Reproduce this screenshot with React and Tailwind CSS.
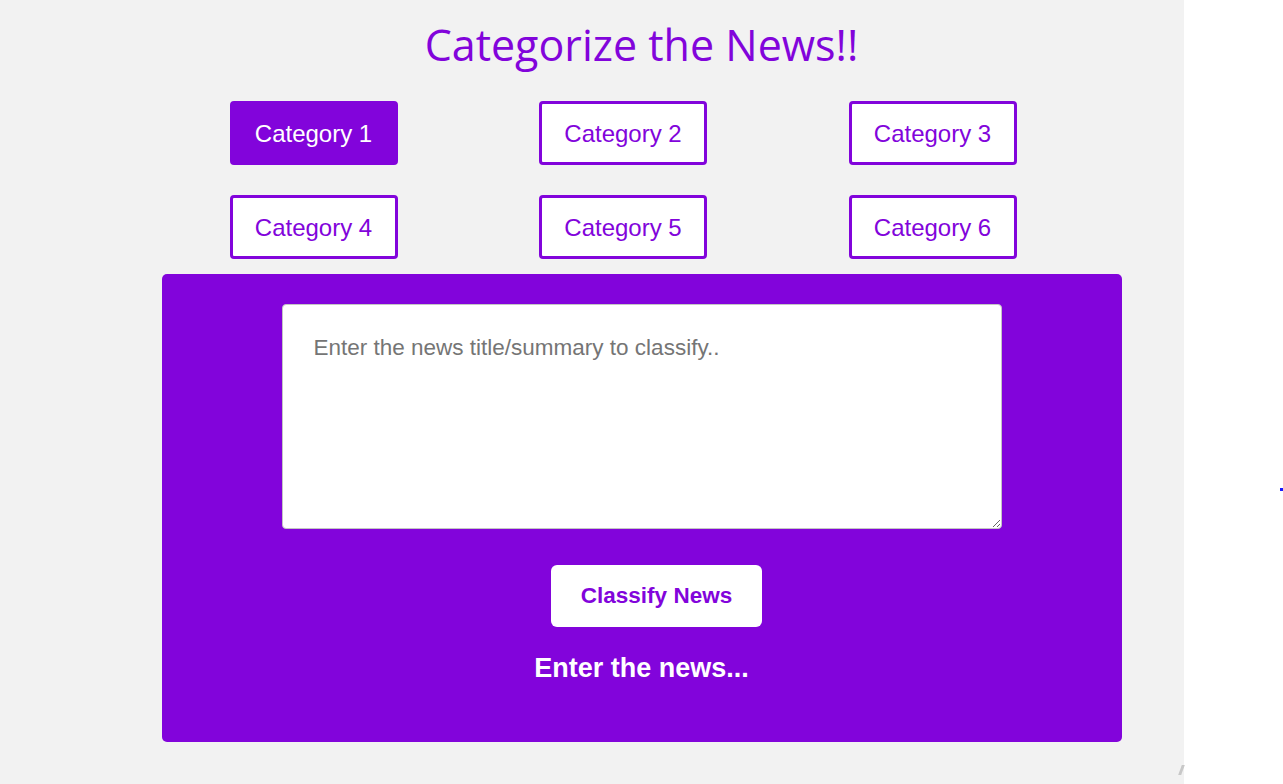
import React, { useState } from "react";

const categories = [
  "Category 1",
  "Category 2",
  "Category 3",
  "Category 4",
  "Category 5",
  "Category 6",
];

const App = () => {
  const [active, setActive] = useState(0);
  const [text, setText] = useState("");

  return (
    <div className="relative min-h-screen bg-[linear-gradient(to_right,#f2f2f2_1184px,#ffffff_1184px)] font-['Liberation_Sans',Arial,sans-serif]">
      <div className="flex flex-col items-center">
        <h1 className="pt-[17px] leading-[56px] text-[43px] text-[#8204db] font-['Open_Sans',sans-serif]">
          Categorize the News!!
        </h1>

        {/* Category buttons */}
        <div className="mt-[28px] w-[960px] pl-[68px] grid grid-cols-[168px_168px_168px] gap-x-[141.5px] gap-y-[30px]">
          {categories.map((cat, index) => (
            <button
              key={index}
              onClick={() => setActive(index)}
              className={`h-[64px] w-[168px] rounded-[4px] border-[3px] border-[#8204db] text-[24px] pt-[2px] cursor-pointer ${
                active === index ? "bg-[#8204db] text-white" : "bg-white text-[#8204db]"
              }`}
            >
              {cat}
            </button>
          ))}
        </div>

        {/* Classifier panel */}
        <div className="mt-[15px] w-[960px] h-[468px] rounded-[5px] bg-[#8204db] flex flex-col items-center pt-[30px]">
          <textarea
            value={text}
            onChange={(e) => setText(e.target.value)}
            placeholder="Enter the news title/summary to classify.."
            className="w-[720px] h-[225px] bg-white rounded-[4px] border border-[#c4c4c4] pl-[31px] pt-[26px] text-[22.5px] text-black placeholder:text-[#757575] outline-none"
          />
          <button className="mt-[36px] ml-[30px] h-[62px] w-[211px] rounded-[6px] bg-white text-[#8204db] text-[22.5px] font-bold cursor-pointer">
            Classify News
          </button>
          <h2 className="mt-[25px] leading-[32px] text-[27px] font-bold text-white">
            Enter the news...
          </h2>
        </div>
      </div>

      <span className="absolute left-[1280px] top-[488px] w-[3px] h-[3px] bg-[#1a1aff]" />
      <span className="absolute left-[1180px] top-[765px] w-[3px] h-[10px] bg-[#c8c8c8] skew-x-[-20deg]" />
    </div>
  );
};

export default App;
